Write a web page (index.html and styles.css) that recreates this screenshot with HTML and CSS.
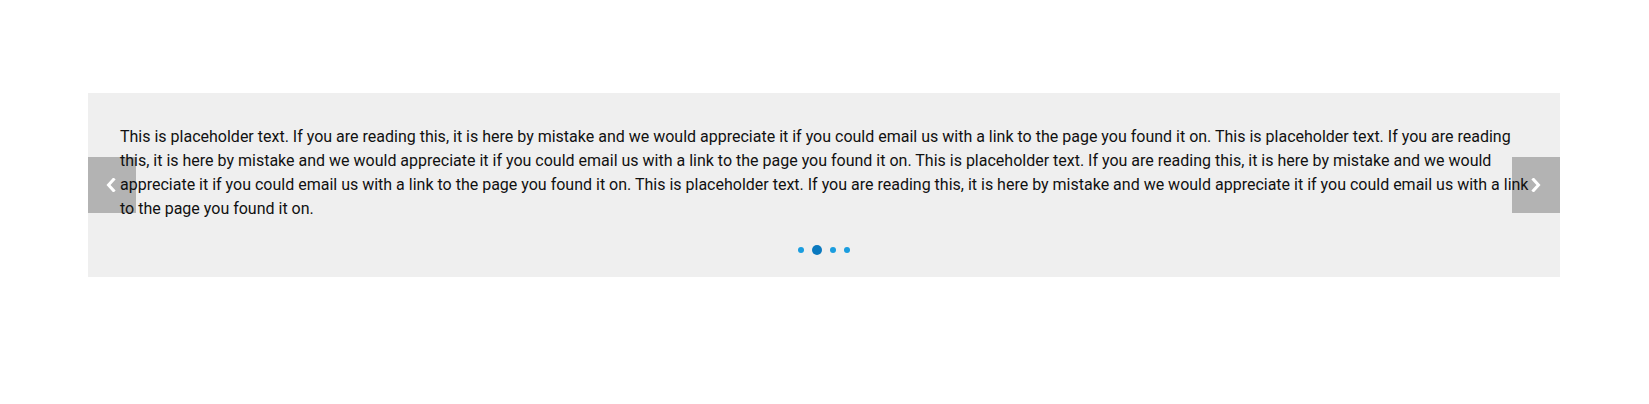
FILE: index.html
```html
<!DOCTYPE html>
<html>
<head>
<meta charset="utf-8">
<link rel="stylesheet" href="styles.css">
</head>
<body>
<div class="page">
  <section class="carousel">
    <button class="nav nav-prev" aria-label="Previous">
      <svg width="10" height="14" viewBox="0 0 10 14"><polyline points="7.5,1.5 2.5,7 7.5,12.5" fill="none" stroke="#fff" stroke-width="3" stroke-linecap="square"/></svg>
    </button>
    <div class="slide">
      <p class="text">This is placeholder text. If you are reading this, it is here by mistake and we would appreciate it if you could email us with a link to the page you found it on. This is placeholder text. If you are reading this, it is here by mistake and we would appreciate it if you could email us with a link to the page you found it on. This is placeholder text. If you are reading this, it is here by mistake and we would appreciate it if you could email us with a link to the page you found it on. This is placeholder text. If you are reading this, it is here by mistake and we would appreciate it if you could email us with a link to the page you found it on.</p>
      <div class="dots">
        <span class="dot"></span>
        <span class="dot active"></span>
        <span class="dot"></span>
        <span class="dot"></span>
      </div>
    </div>
    <button class="nav nav-next" aria-label="Next">
      <svg width="10" height="14" viewBox="0 0 10 14"><polyline points="2.5,1.5 7.5,7 2.5,12.5" fill="none" stroke="#fff" stroke-width="3" stroke-linecap="square"/></svg>
    </button>
  </section>
</div>
</body>
</html>
```
FILE: styles.css
```css
html, body {
  margin: 0;
  padding: 0;
  background: #ffffff;
}
.page {
  padding: 93px 89px 0 88px;
}
.carousel {
  position: relative;
  background: #efefef;
  height: 184px;
  box-sizing: border-box;
}
.slide {
  position: relative;
  z-index: 2;
  padding: 32px 20px 0 32px;
}
.text {
  margin: 0;
  font-family: Roboto, "Liberation Sans", sans-serif;
  font-size: 16px;
  line-height: 24px;
  color: #111111;
}
.dots {
  display: flex;
  justify-content: center;
  align-items: center;
  gap: 8px;
  margin-top: 24px;
  padding-right: 12px;
  height: 10px;
}
.dot {
  width: 6px;
  height: 6px;
  border-radius: 50%;
  background: #1a9ddf;
}
.dot.active {
  width: 10px;
  height: 10px;
  background: #0a79bf;
}
.nav {
  position: absolute;
  top: 64px;
  width: 48px;
  height: 56px;
  border: 0;
  padding: 0;
  margin: 0;
  background: #b3b3b3;
  display: flex;
  align-items: center;
  justify-content: center;
  z-index: 1;
}
.nav svg {
  display: block;
  position: relative;
  z-index: 3;
}
.nav-prev {
  left: 0;
  justify-content: flex-start;
  padding-left: 18px;
}
.nav-next {
  right: 0;
  justify-content: flex-start;
  padding-left: 19px;
}
```
